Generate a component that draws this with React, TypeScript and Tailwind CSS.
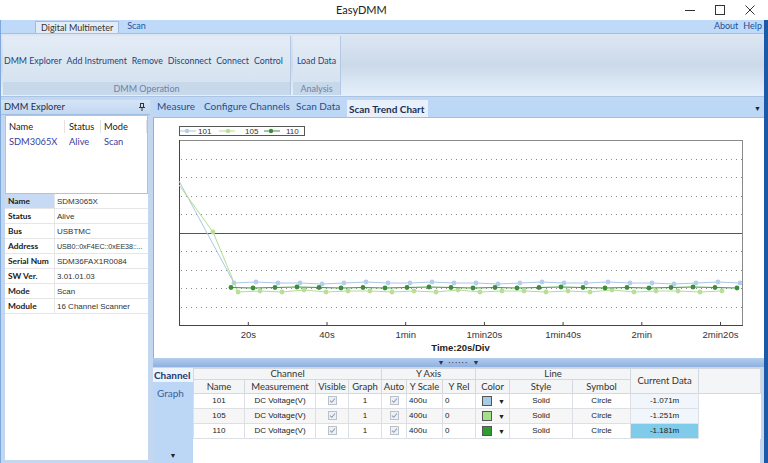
import React from 'react';

type Pt = [number, number];

// chart panel origin on the page
const OX = 153;
const OY = 118;

function flat(startX: number, baseY: number, jitter: number[]): Pt[] {
  const pts: Pt[] = [];
  let k = 0;
  for (let x = startX; x <= 741; x += 22, k++) {
    pts.push([x - OX, baseY + jitter[k % jitter.length] - OY]);
  }
  return pts;
}

const series = [
  {
    name: '101',
    line: '#a9c7e6',
    fill: '#b3cdea',
    pts: [[178 - OX, 181 - OY] as Pt, ...flat(233, 283, [0, -1, 0, 0, 1, 0, -1, 0])],
  },
  {
    name: '105',
    line: '#b4dc92',
    fill: '#b8de98',
    pts: [[178 - OX, 185 - OY] as Pt, [212 - OX, 232 - OY] as Pt, ...flat(237, 291, [1, 0, 1, -1, 1, 0, 0])],
  },
  {
    name: '110',
    line: '#3d963d',
    fill: '#3a8f3a',
    pts: flat(230, 287.5, [0, 0.5, 0, -0.5, 0, 0.5]),
  },
];

const ticks = ['20s', '40s', '1min', '1min20s', '1min40s', '2min', '2min20s'];

function TrendChart() {
  const x0 = 25;
  const x1 = 588;
  const y0 = 22;
  const y1 = 207;
  const step = (y1 - y0) / 10;
  return (
    <svg width={611} height={240} className="block" style={{ fontFamily: '"Liberation Sans", Arial, sans-serif' }}>
      {/* legend */}
      <rect x={25.5} y={8.5} width={125} height={9} fill="#fff" stroke="#555" />
      {[
        { c: series[0], lx: 179, dx: 186, tx: 197 },
        { c: series[1], lx: 218, dx: 227, tx: 244 },
        { c: series[2], lx: 263, dx: 270, tx: 285 },
      ].map((l) => (
        <g key={l.c.name}>
          <line x1={l.lx - OX} x2={l.lx - OX + 16} y1={13} y2={13} stroke={l.c.line} />
          <circle cx={l.dx - OX} cy={13} r={2.2} fill={l.c.fill} />
          <text x={l.tx - OX} y={16} fontSize={8} fill="#333">
            {l.c.name}
          </text>
        </g>
      ))}

      {/* plot frame + grid */}
      <rect x={x0 + 0.5} y={y0 + 0.5} width={x1 - x0} height={y1 - y0} fill="#fff" stroke="#8a8a8a" />
      {Array.from({ length: 9 }, (_, i) => {
        const y = Math.round(y0 + step * (i + 1)) + 0.5;
        return i === 4 ? (
          <line key={i} x1={x0} x2={x1} y1={y} y2={y} stroke="#555" />
        ) : (
          <line key={i} x1={x0 + 2} x2={x1} y1={y} y2={y} stroke="#8c8c8c" strokeDasharray="1 4" />
        );
      })}
      <line x1={x0 + 0.5} x2={x0 + 0.5} y1={y0} y2={y1 + 1} stroke="#444" />
      <line x1={x0} x2={x1 + 1} y1={y1 + 0.5} y2={y1 + 0.5} stroke="#444" />

      {/* series */}
      {series.map((s) => (
        <g key={s.name}>
          <polyline points={s.pts.map((p) => p.join(',')).join(' ')} fill="none" stroke={s.line} strokeWidth={1} />
          {s.pts.slice(s.name === '110' ? 0 : 1).map((p, i) => (
            <circle key={i} cx={p[0]} cy={p[1]} r={2.4} fill={s.fill} />
          ))}
        </g>
      ))}

      {/* time axis */}
      {ticks.map((t, k) => {
        const x = 15.6 + 78.7 * (k + 1);
        return (
          <g key={t}>
            <line x1={x} x2={x} y1={y1 - 3} y2={y1} stroke="#444" />
            <text x={x} y={220} fontSize={9.5} fill="#333" textAnchor="middle">
              {t}
            </text>
          </g>
        );
      })}
      <text x={306.5} y={233} fontSize={9.5} fontWeight="bold" fill="#222" textAnchor="middle">
        Time:20s/Div
      </text>
    </svg>
  );
}

function Check() {
  return (
    <span className="inline-flex w-[9px] h-[9px] items-center justify-center border border-[#b9c1cc] bg-[#eef0f3] align-middle">
      <svg width="7" height="7" viewBox="0 0 7 7">
        <path d="M1 3.6 L2.8 5.3 L6 1.5" fill="none" stroke="#8d9db5" strokeWidth="1.1" />
      </svg>
    </span>
  );
}

const rows = [
  { name: '101', color: '#a6cbe7', data: '-1.071m' },
  { name: '105', color: '#a8df8c', data: '-1.251m' },
  { name: '110', color: '#2f9b30', data: '-1.181m' },
];

function ChannelTable() {
  const th = 'border border-[#d4d9df] bg-[#f4f5f7] font-normal text-[#333] text-[9.5px] leading-[10px] p-0';
  const td = 'border border-[#dcdfe3] p-0 text-[8px] text-[#222] font-["Liberation_Sans",Arial,sans-serif]';
  return (
    <table className="table-fixed border-collapse w-[567px]">
      <colgroup>
        <col className="w-[51px]" />
        <col className="w-[71px]" />
        <col className="w-[33px]" />
        <col className="w-[33px]" />
        <col className="w-[25px]" />
        <col className="w-[36px]" />
        <col className="w-[33px]" />
        <col className="w-[34px]" />
        <col className="w-[63px]" />
        <col className="w-[58px]" />
        <col className="w-[68px]" />
        <col className="w-[62px]" />
      </colgroup>
      <thead>
        <tr className="h-[11px]">
          <th colSpan={4} className={th}>Channel</th>
          <th colSpan={3} className={th}>Y Axis</th>
          <th colSpan={3} className={th}>Line</th>
          <th rowSpan={2} className={th}>Current Data</th>
          <th rowSpan={2} className={th}></th>
        </tr>
        <tr className="h-[14px]">
          {['Name', 'Measurement', 'Visible', 'Graph', 'Auto', 'Y Scale', 'Y Rel', 'Color', 'Style', 'Symbol'].map((h) => (
            <th key={h} className={th}>{h}</th>
          ))}
        </tr>
      </thead>
      <tbody>
        {rows.map((r, i) => {
          const alt = i === 1 ? 'bg-[#f6f6f6]' : 'bg-white';
          const cur = i === 2 ? 'bg-[#7fcbea]' : 'bg-[#f1f6fc]';
          return (
            <tr key={r.name} className="h-[15px]">
              <td className={`${td} ${alt} text-center`}>{r.name}</td>
              <td className={`${td} ${alt} text-center`}>DC Voltage(V)</td>
              <td className={`${td} ${alt} text-center`}><Check /></td>
              <td className={`${td} ${alt} text-center`}>1</td>
              <td className={`${td} ${alt} text-center`}><Check /></td>
              <td className={`${td} ${alt} pl-[2px]`}>400u</td>
              <td className={`${td} ${alt} pl-[2px]`}>0</td>
              <td className={`${td} ${alt}`}>
                <div className="flex items-center pl-[6px] gap-[6px]">
                  <span className="w-[10px] h-[10px] border border-[#555]" style={{ backgroundColor: r.color }} />
                  <span className="text-[7px] leading-none">▼</span>
                </div>
              </td>
              <td className={`${td} ${alt} text-center`}>Solid</td>
              <td className={`${td} ${alt} text-center`}>Circle</td>
              <td className={`${td} ${cur} text-center`}>{r.data}</td>
              <td className="bg-white"></td>
            </tr>
          );
        })}
      </tbody>
    </table>
  );
}

const props: [string, string][] = [
  ['Name', 'SDM3065X'],
  ['Status', 'Alive'],
  ['Bus', 'USBTMC'],
  ['Address', 'USB0::0xF4EC::0xEE38::...'],
  ['Serial Num', 'SDM36FAX1R0084'],
  ['SW Ver.', '3.01.01.03'],
  ['Mode', 'Scan'],
  ['Module', '16 Channel Scanner'],
];

export default function App() {
  return (
    <div className="w-[768px] h-[463px] overflow-hidden flex flex-col bg-white font-['Lato','Open_Sans',sans-serif] text-[#222]">
      {/* title bar */}
      <div className="h-[20px] flex items-center bg-white shrink-0">
        <span className="pl-[336px] text-[11px] text-[#222]">EasyDMM</span>
        <div className="ml-auto mr-[3px] flex">
          <span className="w-[30px] h-[20px] flex items-center justify-center">
            <svg width="10" height="10"><line x1="0" x2="10" y1="5.5" y2="5.5" stroke="#333" /></svg>
          </span>
          <span className="w-[30px] h-[20px] flex items-center justify-center">
            <svg width="10" height="10"><rect x="0.5" y="0.5" width="9" height="9" fill="none" stroke="#333" /></svg>
          </span>
          <span className="w-[30px] h-[20px] flex items-center justify-center">
            <svg width="10" height="10"><path d="M0.5 0.5 L9.5 9.5 M9.5 0.5 L0.5 9.5" stroke="#333" /></svg>
          </span>
        </div>
      </div>

      <div className="flex-1 min-h-0 flex flex-col border-l border-l-[#7ea9da] border-r-4 border-r-[#1c5aa8] bg-[#c3d8f0]">
        {/* ribbon tabs */}
        <div className="h-[14px] shrink-0 flex items-end bg-[#bedaf8] border-b border-[#9fc0e8] text-[9px] leading-[10px]">
          <span className="ml-[34px] h-[12px] px-[5px] pt-[1px] bg-[#e2ecf8] border border-b-0 border-[#9dbde3] text-[#333]">Digital Multimeter</span>
          <span className="ml-[8px] pb-[2px] text-[#1f55a3]">Scan</span>
          <span className="ml-auto pb-[2px] text-[#1f4f94]">About</span>
          <span className="ml-[5px] mr-[2px] pb-[2px] text-[#1f4f94]">Help</span>
        </div>

        {/* ribbon body */}
        <div className="h-[63px] shrink-0 flex pt-[2px] pb-[1px] bg-gradient-to-b from-[#dde7f3] via-[#cbd9ea] to-[#e6f0fb] border-b border-[#a9c4e4]">
          <div className="ml-[2px] w-[288px] flex flex-col bg-gradient-to-b from-[#e3ecf6] to-[#d3e0ef] border-r border-[#b3c8e2]">
            <div className="flex-1 flex items-center gap-[5px] pl-[1px] pt-[4px] text-[8.8px] text-[#23437a] whitespace-nowrap">
              <span>DMM Explorer</span>
              <span>Add Instrument</span>
              <span>Remove</span>
              <span>Disconnect</span>
              <span>Connect</span>
              <span>Control</span>
            </div>
            <div className="h-[13px] bg-[#c8d8eb] text-center text-[9px] leading-[13px] text-[#6d83a3]">DMM Operation</div>
          </div>
          <div className="ml-[2px] w-[48px] flex flex-col bg-gradient-to-b from-[#e3ecf6] to-[#d3e0ef] border-r border-[#b3c8e2]">
            <div className="flex-1 flex items-center justify-center pt-[4px] text-[8.8px] text-[#23437a] whitespace-nowrap">Load Data</div>
            <div className="h-[13px] bg-[#c8d8eb] text-center text-[9px] leading-[13px] text-[#6d83a3]">Analysis</div>
          </div>
        </div>

        {/* workspace */}
        <div className="flex-1 min-h-0 flex pt-[3px]">
          {/* left dock */}
          <div className="w-[149px] shrink-0 flex flex-col">
            <div className="h-[15px] shrink-0 flex items-center bg-gradient-to-b from-[#d5e5f7] to-[#c2d7f0] border-b border-[#9ebee3] text-[9.3px] text-[#1e2f52] pl-[3px]">
              <span>DMM Explorer</span>
              <svg className="ml-auto mr-[5px]" width="6" height="8" viewBox="0 0 6 8">
                <path d="M1 0.5 H5 M1.5 0.5 V4.5 M4.5 0.5 V4.5 M0 4.5 H6 M3 4.5 V8" stroke="#333" fill="none" />
              </svg>
            </div>
            <div className="ml-[4px] w-[143px] h-[79px] shrink-0 bg-white border border-[#a9c4e4]">
              <div className="grid grid-cols-[59px_36px_46px] mt-[4px] h-[13px] text-[9.3px] leading-[13px] text-[#222]">
                <span className="pl-[3px] border-r border-[#e2e2e2]">Name</span>
                <span className="pl-[4px] border-r border-[#e2e2e2]">Status</span>
                <span className="pl-[3px] border-r border-[#e2e2e2]">Mode</span>
              </div>
              <div className="grid grid-cols-[59px_36px_46px] mt-[2px] h-[13px] text-[9.3px] leading-[13px] text-[#3a3da0]">
                <span className="pl-[3px]">SDM3065X</span>
                <span className="pl-[4px]">Alive</span>
                <span className="pl-[3px]">Scan</span>
              </div>
            </div>
            <div className="ml-[4px] w-[143px] flex-1 mb-[3px] bg-white flex flex-col">
              {props.map(([k, v], i) => (
                <div key={k} className="h-[15px] shrink-0 flex border-b border-[#e6e6e6]">
                  <span className={`w-[49px] shrink-0 pl-[3px] text-[8.4px] leading-[15px] font-bold text-[#1a1a1a] whitespace-nowrap overflow-hidden ${i === 0 ? 'bg-[#c6dbf3]' : 'bg-white'}`}>{k}</span>
                  <span className={`flex-1 pl-[2px] leading-[15px] text-[#333] whitespace-nowrap overflow-hidden border-l border-[#e6e6e6] font-['Liberation_Sans',Arial,sans-serif] ${k === 'Address' ? 'text-[7.2px] tracking-[-0.1px]' : 'text-[8px]'}`}>{v}</span>
                </div>
              ))}
            </div>
          </div>

          {/* right area */}
          <div className="ml-[3px] w-[611px] flex flex-col">
            <div className="h-[18px] shrink-0 flex items-end bg-[#bdd8f6] border-b border-[#9ebde4] text-[10px] text-[#2b4c82]">
              <span className="w-[47px] pl-[4px] pb-[3px]">Measure</span>
              <span className="w-[92px] pl-[4px] pb-[3px]">Configure Channels</span>
              <span className="w-[55px] pl-[4px] pb-[3px]">Scan Data</span>
              <span className="w-[81px] h-[17px] pl-[2px] pt-[2px] bg-[#e8f1fb] font-bold text-[#1b2f55]">Scan Trend Chart</span>
              <span className="ml-auto mr-[3px] pb-[4px] text-[7px] text-[#222]">▼</span>
            </div>
            <div className="h-[240px] shrink-0 bg-white border-l border-[#8fb0d8]">
              <TrendChart />
            </div>
            <div className="h-[9px] shrink-0 flex items-center justify-center gap-[4px] bg-gradient-to-b from-[#b3cdee] to-[#8eb1df] text-[7px] leading-none text-[#2a3550]">
              <span>▼</span>
              <span className="tracking-[1.5px]">······</span>
              <span>▼</span>
            </div>
            <div className="flex-1 min-h-0 flex pt-[1px]">
              <div className="w-[40px] shrink-0 flex flex-col bg-[#bcd7f5]">
                <span className="h-[14px] bg-[#eef4fb] text-[10px] leading-[14px] font-bold text-[#1f3a6b] pl-[1px]">Channel</span>
                <span className="mt-[4px] pl-[4px] text-[10px] text-[#3b5e9c]">Graph</span>
                <span className="mt-auto mb-[3px] text-center text-[7px] text-[#222]">▼</span>
              </div>
              <div className="w-[567px] bg-white">
                <ChannelTable />
              </div>
            </div>
          </div>
        </div>
      </div>
    </div>
  );
}
